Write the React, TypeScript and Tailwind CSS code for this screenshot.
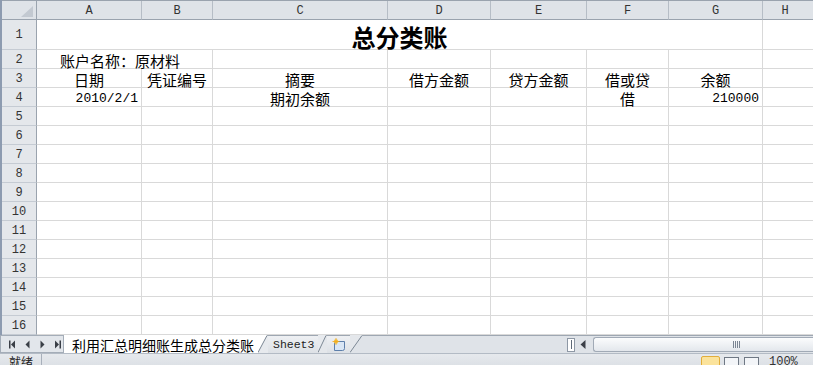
const CJK = "font-['Noto_Sans_CJK_SC',sans-serif]";
const MONO = "font-['Liberation_Mono',monospace]";

const COLS = [
  { key: "A", w: "w-[105px]" },
  { key: "B", w: "w-[71px]" },
  { key: "C", w: "w-[175px]" },
  { key: "D", w: "w-[103px]" },
  { key: "E", w: "w-[96px]" },
  { key: "F", w: "w-[82px]" },
  { key: "G", w: "w-[94px]" },
];

type CellData = { text: string; align?: "center" | "right" | "left"; mono?: boolean };

const ROW3: CellData[] = [
  { text: "日期" },
  { text: "凭证编号" },
  { text: "摘要" },
  { text: "借方金额" },
  { text: "贷方金额" },
  { text: "借或贷" },
  { text: "余额" },
];

const ROW4: CellData[] = [
  { text: "2010/2/1", align: "right", mono: true },
  { text: "" },
  { text: "期初余额" },
  { text: "" },
  { text: "" },
  { text: "借" },
  { text: "210000", align: "right", mono: true },
];

function RowHead({ n }: { n: number }) {
  return (
    <div
      className={`flex h-full w-[35px] shrink-0 items-center justify-center border-r border-b border-r-[#9aa3ae] border-b-[#c5cbd3] bg-[#e4e7eb] pt-[1px] text-[12px] text-[#333] ${MONO}`}
    >
      {n}
    </div>
  );
}

function Cell({ w, data }: { w: string; data?: CellData }) {
  const align =
    data?.align === "right" ? "justify-end pr-[3px]" : data?.align === "left" ? "justify-start" : "justify-center";
  const font = data?.mono ? `${MONO} text-[13px] pt-[2px]` : `${CJK} text-[15px] pt-[3px]`;
  return (
    <div
      className={`flex h-full ${w} shrink-0 items-center whitespace-nowrap border-r border-b border-[#d9d9d9] leading-none text-black ${align} ${font}`}
    >
      {data?.text}
    </div>
  );
}

function Tail() {
  return <div className="h-full flex-1 border-b border-[#d9d9d9]" />;
}

function Slant({ left, right, w }: { left: string; right: string; w: number }) {
  return (
    <svg width={w} height="18" viewBox={`0 0 ${w} 18`} className="shrink-0">
      <polygon points={`0,0 ${w},0 ${w},18 0,18`} fill={right} />
      <polygon points={`0,0 ${w - 1},0 0,17`} fill={left} />
      <line x1="0" y1="17.5" x2={w - 1} y2="0.5" stroke="#7d8895" />
      <line x1={w - 1} y1="0.5" x2={w} y2="0.5" stroke="#9ea7b2" />
    </svg>
  );
}

function NavIcon({ kind }: { kind: "first" | "prev" | "next" | "last" }) {
  return (
    <svg width="7" height="9" viewBox="0 0 7 9">
      {kind === "first" && (
        <>
          <rect x="0" y="0.5" width="1.5" height="8" fill="#3a3f47" />
          <polygon points="6,0.5 2,4.5 6,8.5" fill="#3a3f47" />
        </>
      )}
      {kind === "prev" && <polygon points="5.5,0.5 1.5,4.5 5.5,8.5" fill="#3a3f47" />}
      {kind === "next" && <polygon points="1.5,0.5 5.5,4.5 1.5,8.5" fill="#3a3f47" />}
      {kind === "last" && (
        <>
          <polygon points="1,0.5 5,4.5 1,8.5" fill="#3a3f47" />
          <rect x="5.5" y="0.5" width="1.5" height="8" fill="#3a3f47" />
        </>
      )}
    </svg>
  );
}

export default function App() {
  const rows = Array.from({ length: 12 }, (_, i) => i + 5);
  return (
    <div className="flex h-[365px] w-[813px] flex-col overflow-hidden bg-white">
      {/* top strip */}
      <div className="flex h-[2px]">
        <div className="w-[238px] border-r border-[#a3a9b1] bg-[#eceef1]" />
        <div className="flex-1 bg-white" />
      </div>
      <div className="h-[1px] bg-[#a9b1bb]" />
      <div className="h-[2px] bg-[#e8ebef]" />

      {/* sheet */}
      <div className="flex flex-col border-l-2 border-[#8d9bb0]">
        {/* column headers */}
        <div className="flex h-[20px] border-t border-[#9aa3ae] bg-[#dfe3e8]">
          <div className="relative h-full w-[35px] shrink-0 border-r border-b border-[#9aa3ae]">
            <svg width="12" height="11" viewBox="0 0 12 11" className="absolute right-[3px] bottom-[2px]">
              <polygon points="12,0 12,11 0,11" fill="#c3c9d1" />
            </svg>
          </div>
          {COLS.map((c) => (
            <div
              key={c.key}
              className={`flex h-full ${c.w} shrink-0 items-center justify-center border-r border-b border-r-[#b6bdc6] border-b-[#9aa3ae] pt-[1px] text-[12px] text-[#333] ${MONO}`}
            >
              {c.key}
            </div>
          ))}
          <div
            className={`flex h-full flex-1 items-center justify-center border-b border-[#9aa3ae] pt-[1px] pr-[6px] text-[12px] text-[#333] ${MONO}`}
          >
            H
          </div>
        </div>

        {/* row 1: title merged A1:G1 */}
        <div className="flex h-[30px]">
          <RowHead n={1} />
          <div
            className={`flex h-full w-[726px] shrink-0 items-center justify-center border-r border-b border-[#d9d9d9] pt-[4px] text-[24px] font-bold leading-none text-black ${CJK}`}
          >
            总分类账
          </div>
          <Tail />
        </div>

        {/* row 2 */}
        <div className="flex h-[19px]">
          <RowHead n={2} />
          <div
            className={`flex h-full w-[176px] shrink-0 items-center whitespace-nowrap border-r border-b border-[#d9d9d9] pl-[23px] pt-[3px] text-[15px] leading-none text-black ${CJK}`}
          >
            账户名称：原材料
          </div>
          {COLS.slice(2).map((c) => (
            <Cell key={c.key} w={c.w} />
          ))}
          <Tail />
        </div>

        {/* row 3 */}
        <div className="flex h-[19px]">
          <RowHead n={3} />
          {COLS.map((c, i) => (
            <Cell key={c.key} w={c.w} data={ROW3[i]} />
          ))}
          <Tail />
        </div>

        {/* row 4 */}
        <div className="flex h-[19px]">
          <RowHead n={4} />
          {COLS.map((c, i) => (
            <Cell key={c.key} w={c.w} data={ROW4[i]} />
          ))}
          <Tail />
        </div>

        {rows.map((n) => (
          <div key={n} className="flex h-[19px]">
            <RowHead n={n} />
            {COLS.map((c) => (
              <Cell key={c.key} w={c.w} />
            ))}
            <Tail />
          </div>
        ))}
      </div>

      {/* sheet tabs + horizontal scroll */}
      <div className="flex h-[18px] shrink-0 bg-[#dfe3e8]">
        <div className="flex w-[64px] shrink-0 items-center gap-[8px] border border-[#a4adb8] bg-[#e2e6eb] pl-[8px]">
          <NavIcon kind="first" />
          <NavIcon kind="prev" />
          <NavIcon kind="next" />
          <NavIcon kind="last" />
        </div>
        <div
          className={`flex h-full w-[194px] shrink-0 items-center bg-white pl-[8px] pt-[1px] text-[14px] leading-none text-black ${CJK}`}
        >
          利用汇总明细账生成总分类账
        </div>
        <Slant left="#ffffff" right="#e7eaee" w={10} />
        <div
          className={`flex h-full w-[50px] shrink-0 items-center border-t border-[#9ea7b2] bg-gradient-to-b from-[#eef0f3] to-[#dde1e6] pl-[5px] text-[11.5px] text-[#222] ${MONO}`}
        >
          Sheet3
        </div>
        <Slant left="#e7eaee" right="#e4e7eb" w={9} />
        <div className="flex h-full w-[23px] shrink-0 items-center border-t border-[#9ea7b2] bg-gradient-to-b from-[#eef0f3] to-[#dde1e6] pl-[5px]">
          <svg width="14" height="13" viewBox="0 0 14 13">
            <path d="M2.5 3.5 H12.5 V10.5 Q12.5 12.5 10.5 12.5 H2.5 Z" fill="#d9e6f5" stroke="#5d7fab" />
            <circle cx="4" cy="3.5" r="2.2" fill="#f5c242" />
            <path d="M4 0 V7 M0.5 3.5 H7.5" stroke="#f0a81c" strokeWidth="0.8" />
          </svg>
        </div>
        <Slant left="#e4e7eb" right="#dfe3e8" w={13} />
        <div className="h-full flex-1 border-t border-[#9ea7b2]" />
        <div className="flex h-full w-[247px] shrink-0 items-center border-t border-[#9ea7b2]">
          <div className="ml-[1px] flex h-[14px] w-[8px] items-center justify-center border border-[#8e98a5] bg-white">
            <div className="h-[9px] w-[1px] bg-[#5f6a78]" />
          </div>
          <svg width="6" height="9" viewBox="0 0 6 9" className="ml-[5px]">
            <polygon points="5.5,0 0.5,4.5 5.5,9" fill="#3c4048" />
          </svg>
          <div className="ml-[7px] flex h-[15px] flex-1 items-center rounded-l-[3px] border border-r-0 border-[#a1aab6] bg-gradient-to-b from-[#fbfcfd] to-[#e3e7ec] pl-[139px]">
            <div className="flex h-[7px] gap-[1px]">
              <div className="w-[1px] bg-[#7b8593]" />
              <div className="w-[1px] bg-[#7b8593]" />
              <div className="w-[1px] bg-[#7b8593]" />
              <div className="w-[1px] bg-[#7b8593]" />
            </div>
          </div>
        </div>
      </div>

      {/* status bar */}
      <div className="flex h-[24px] shrink-0 items-start border-t border-[#b3bbc5] bg-gradient-to-b from-[#e6e9ed] to-[#d3d8de]">
        <div className={`w-[42px] shrink-0 border-r border-[#a8b0bb] pl-[9px] pt-[2px] text-[12px] leading-none text-[#222] ${CJK}`}>
          就绪
        </div>
        <div className="flex-1" />
        <div className="mt-[2px] h-[16px] w-[19px] shrink-0 rounded-[2px] border border-[#e2ae3c] bg-[#fbe39c]" />
        <div className="ml-[4px] mt-[3px] h-[13px] w-[15px] shrink-0 border border-[#6f7884] bg-[#f3f5f8]" />
        <div className="ml-[5px] mt-[3px] h-[13px] w-[15px] shrink-0 border border-[#6f7884] bg-[#f3f5f8]" />
        <div className={`ml-[10px] w-[44px] shrink-0 pt-[2px] text-[12px] leading-none text-[#333] ${MONO}`}>100%</div>
      </div>
    </div>
  );
}
